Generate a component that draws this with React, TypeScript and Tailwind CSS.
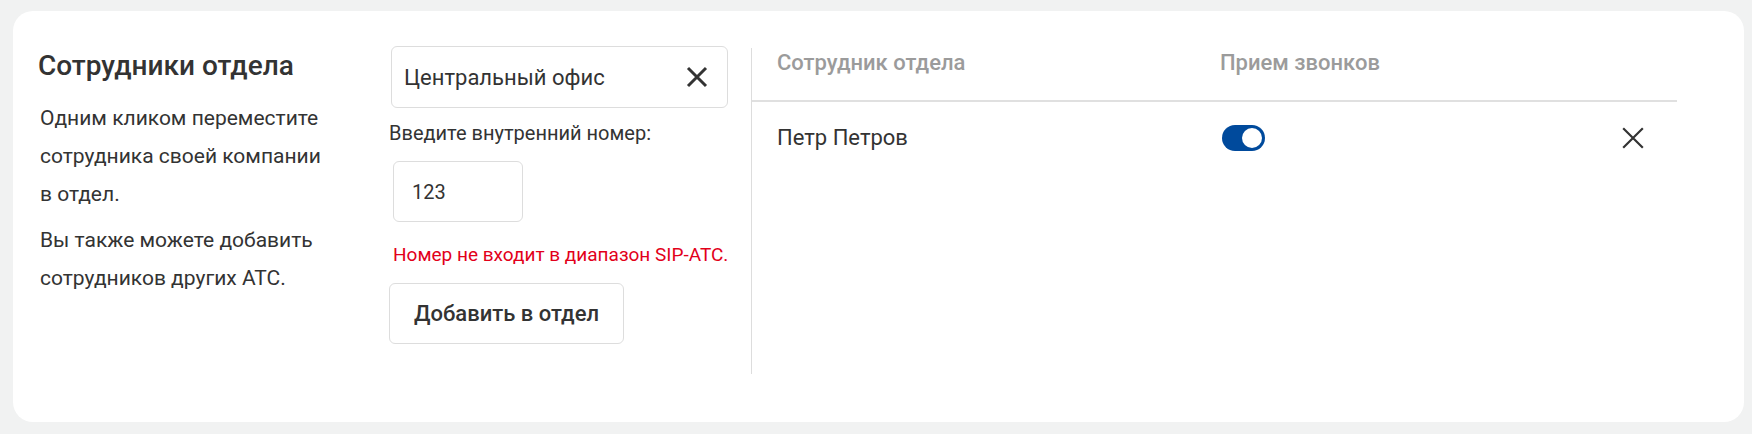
import { useState } from "react";

function CloseIcon({ className, strokeWidth = 2 }: { className?: string; strokeWidth?: number }) {
    return (
        <svg viewBox="0 0 22 22" className={className} fill="none" stroke="currentColor" strokeWidth={strokeWidth} strokeLinecap="butt">
            <path d="M2 2L20 20M20 2L2 20" />
        </svg>
    );
}

export default function App() {
    const [enabled, setEnabled] = useState(true);

    return (
        <div className="w-[1752px] h-[434px] bg-[#f1f2f2] pt-[11px] pl-[13px] pr-[8px] pb-[12px] font-['Roboto',sans-serif] text-[#333333]">
            <div className="flex h-full bg-white rounded-[20px]">
                {/* Description */}
                <div className="w-[376px] shrink-0 pl-[25px] pt-[39px]">
                    <h2 className="text-[28px] leading-[32px] font-medium">Сотрудники отдела</h2>
                    <div className="w-[292px] pl-[2px] text-[21px] leading-[38px] mt-[17px]">
                        <p>Одним кликом переместите сотрудника своей компании в отдел.</p>
                        <p className="mt-[8px]">Вы также можете добавить сотрудников других АТС.</p>
                    </div>
                </div>

                {/* Add form */}
                <div className="w-[362px] shrink-0 pt-[35px]">
                    <div className="ml-[2px] w-[337px] h-[62px] flex items-center justify-between pl-[12px] pr-[19px] border border-[#dddddd] rounded-[6px]">
                        <span className="text-[22px]">Центральный офис</span>
                        <CloseIcon className="w-[22px] h-[22px]" strokeWidth={3} />
                    </div>
                    <label className="block mt-[13px] text-[20px] leading-[24px]">Введите внутренний номер:</label>
                    <input
                        className="block ml-[4px] mt-[16px] w-[130px] h-[61px] px-[18px] text-[20px] border border-[#dddddd] rounded-[6px] outline-none"
                        defaultValue="123"
                    />
                    <p className="ml-[4px] mt-[21px] text-[19px] leading-[24px] text-[#e2001a] whitespace-nowrap">Номер не входит в диапазон SIP-АТС.</p>
                    <button className="mt-[16px] w-[235px] h-[61px] border border-[#dddddd] rounded-[6px] text-[22px] font-medium bg-white">
                        Добавить в отдел
                    </button>
                </div>

                {/* Table */}
                <div className="w-[926px] shrink-0 mt-[37px] mb-[48px] border-l border-[#dddddd]">
                    <div className="flex h-[54px] pt-[3px] border-b-2 border-[#e0e0e0] text-[22px] leading-[24px] font-medium text-[#9b9b9b]">
                        <div className="w-[468px] pl-[25px]">Сотрудник отдела</div>
                        <div>Прием звонков</div>
                    </div>
                    <div className="flex items-center pt-[22px]">
                        <div className="w-[470px] pl-[25px] text-[22px] leading-[28px]">Петр Петров</div>
                        <button
                            onClick={() => setEnabled(!enabled)}
                            className={`flex items-center w-[43px] h-[26px] rounded-full px-[3px] ${enabled ? "bg-[#004a9c] justify-end" : "bg-[#cccccc] justify-start"}`}
                        >
                            <span className="w-[20px] h-[20px] rounded-full bg-white" />
                        </button>
                        <CloseIcon className="ml-[356px] w-[24px] h-[24px]" />
                    </div>
                </div>
            </div>
        </div>
    );
}
